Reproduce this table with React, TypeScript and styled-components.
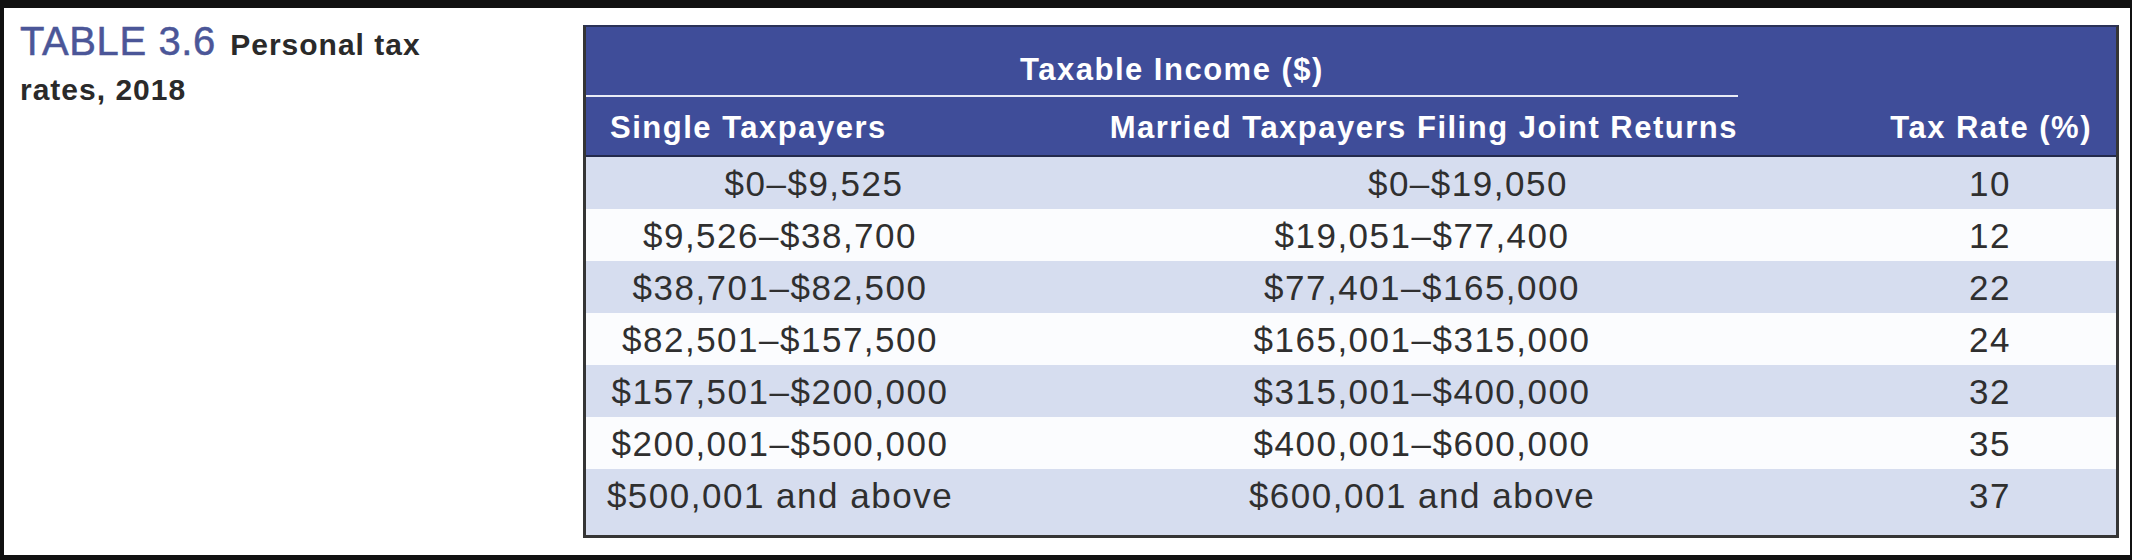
import React from "react";
import styled, { createGlobalStyle } from "styled-components";

const GlobalStyle = createGlobalStyle`
  html, body { margin: 0; padding: 0; background: #111111; }
  body { font-family: "Liberation Sans", Arial, sans-serif; }
`;

const Page = styled.div`
  width: 2132px;
  height: 560px;
  box-sizing: border-box;
  padding: 8px 2px 5px 4px;
  background: #111111;
`;

const Panel = styled.div`
  height: 100%;
  box-sizing: border-box;
  background: #ffffff;
  display: flex;
  align-items: flex-start;
  padding: 14px 11px 0 16px;
`;

const Caption = styled.div`
  flex: 0 0 563px;
  font-family: "Liberation Sans", Arial, sans-serif;
  font-size: 30px;
  line-height: 45px;
  font-weight: 700;
  letter-spacing: 1px;
  color: #2a2a2a;
`;

const TableNumber = styled.span`
  font-size: 40px;
  line-height: 38px;
  font-weight: 400;
  color: #4b5698;
  letter-spacing: 0.6px;
  -webkit-text-stroke: 0.5px #4b5698;
  margin-right: 5px;
`;

const Table = styled.div`
  flex: 0 0 1536px;
  margin-top: 3px;
  box-sizing: border-box;
  border-top: 2px solid #2b3258;
  border-left: 3px solid #353535;
  border-right: 3px solid #353535;
  border-bottom: 3px solid #353535;
  display: flex;
  flex-direction: column;
`;

const HeadTop = styled.div`
  display: grid;
  grid-template-columns: 1152px 378px;
  background: #3f4d99;
`;

const HeadBottom = styled.div`
  display: grid;
  grid-template-columns: 520px 632px 378px;
  background: #3f4d99;
  border-bottom: 2px solid #232a4c;
`;

const HeadCell = styled.div<{ $align: "left" | "center" | "right"; $pl?: number; $pr?: number; $h: number; $pb: number; $rule?: boolean }>`
  height: ${(p) => p.$h}px;
  box-sizing: border-box;
  display: flex;
  align-items: flex-end;
  justify-content: ${(p) => (p.$align === "left" ? "flex-start" : p.$align === "right" ? "flex-end" : "center")};
  padding: 0 ${(p) => p.$pr ?? 0}px ${(p) => p.$pb}px ${(p) => p.$pl ?? 0}px;
  border-bottom: ${(p) => (p.$rule ? "2px solid #e9ecf6" : "none")};
  font-family: "Liberation Sans", Arial, sans-serif;
  font-weight: 700;
  font-size: 31px;
  line-height: 31px;
  letter-spacing: 1.5px;
  color: #ffffff;
  white-space: nowrap;
`;

const Row = styled.div<{ $shade: boolean; $last: boolean }>`
  display: grid;
  grid-template-columns: 520px 632px 378px;
  height: ${(p) => (p.$last ? 66 : 52)}px;
  box-sizing: border-box;
  padding-bottom: ${(p) => (p.$last ? 14 : 0)}px;
  background: ${(p) => (p.$shade ? "#d6ddef" : "#fbfcfe")};
`;

const Cell = styled.div<{ $pl?: number; $pr?: number }>`
  display: flex;
  align-items: center;
  justify-content: center;
  padding: 0 ${(p) => p.$pr ?? 0}px 0 ${(p) => p.$pl ?? 0}px;
  font-family: "Liberation Sans", Arial, sans-serif;
  font-size: 35px;
  line-height: 35px;
  letter-spacing: 1.5px;
  color: #2f2f2f;
  white-space: nowrap;
`;

type RowData = { single: string; married: string; rate: string; shift: number };

const rows: RowData[] = [
  { single: "$0–$9,525", married: "$0–$19,050", rate: "10", shift: 34 },
  { single: "$9,526–$38,700", married: "$19,051–$77,400", rate: "12", shift: 0 },
  { single: "$38,701–$82,500", married: "$77,401–$165,000", rate: "22", shift: 0 },
  { single: "$82,501–$157,500", married: "$165,001–$315,000", rate: "24", shift: 0 },
  { single: "$157,501–$200,000", married: "$315,001–$400,000", rate: "32", shift: 0 },
  { single: "$200,001–$500,000", married: "$400,001–$600,000", rate: "35", shift: 0 },
  { single: "$500,001 and above", married: "$600,001 and above", rate: "37", shift: 0 },
];

export default function App() {
  return (
    <>
      <GlobalStyle />
      <Page>
        <Panel>
          <Caption>
            <TableNumber>TABLE 3.6</TableNumber> Personal tax
            <br />
            rates, 2018
          </Caption>
          <Table>
            <HeadTop>
              <HeadCell $align="center" $pl={20} $h={70} $pb={10} $rule>
                Taxable Income ($)
              </HeadCell>
              <HeadCell $align="right" $h={70} $pb={10} />
            </HeadTop>
            <HeadBottom>
              <HeadCell $align="left" $pl={24} $h={58} $pb={12}>
                Single Taxpayers
              </HeadCell>
              <HeadCell $align="right" $pr={0} $h={58} $pb={12}>
                Married Taxpayers Filing Joint Returns
              </HeadCell>
              <HeadCell $align="right" $pr={24} $h={58} $pb={12}>
                Tax Rate (%)
              </HeadCell>
            </HeadBottom>
            {rows.map((r, i) => (
              <Row key={i} $shade={i % 2 === 0} $last={i === rows.length - 1}>
                <Cell $pl={r.shift * 2} $pr={132}>{r.single}</Cell>
                <Cell $pl={r.shift * 2.7}>{r.married}</Cell>
                <Cell $pl={126}>{r.rate}</Cell>
              </Row>
            ))}
          </Table>
        </Panel>
      </Page>
    </>
  );
}
